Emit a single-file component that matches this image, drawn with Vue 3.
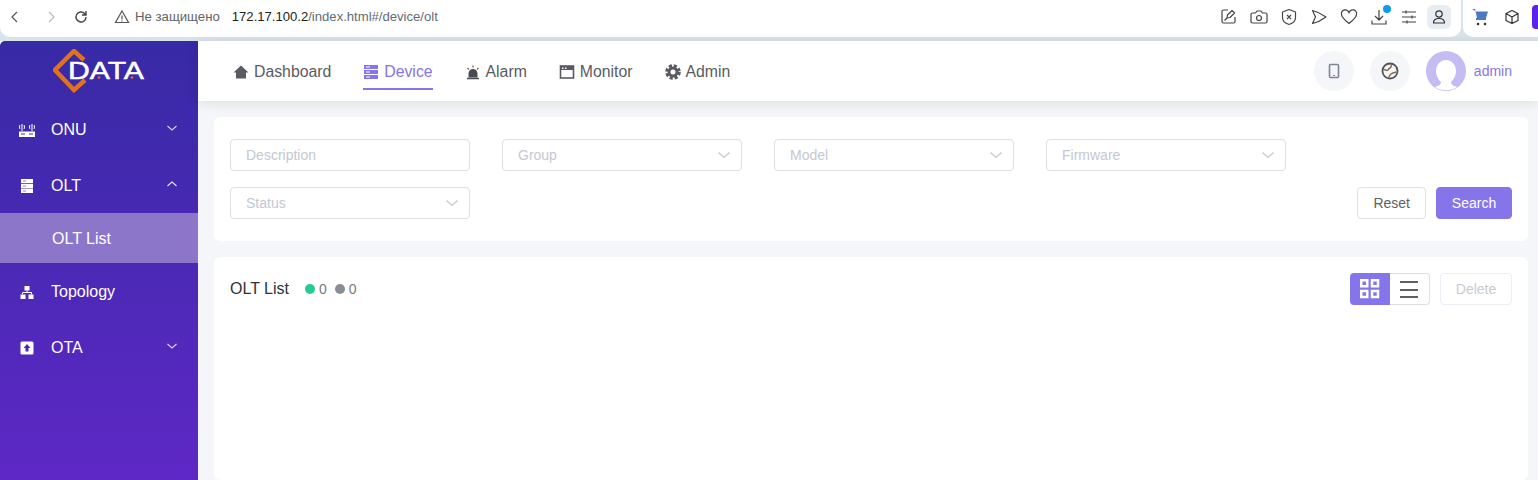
<script setup>
const chromeIcons = [
  'M9 3H4.500A1.500 1.500 0 0 0 3 4.500v10A1.500 1.500 0 0 0 4.500 16h10a1.500 1.500 0 0 0 1.500-1.500V10M8 11l.5-3L13 3.500 15.500 6 11 10.500zM5.500 13.500 8 11',
  'M3.500 6H6.500L8 4h4l1.500 2h3A1.500 1.500 0 0 1 18 7.500v7a1.500 1.500 0 0 1-1.500 1.500h-13A1.500 1.500 0 0 1 2 14.500v-7A1.500 1.500 0 0 1 3.500 6zM10 8.500a2.500 2.500 0 1 0 0 5 2.500 2.500 0 0 0 0-5z',
  'M10 2.500 16.500 5v5.500c0 3.500-3 6-6.500 7-3.500-1-6.500-3.500-6.500-7V5zM8 8l4 4M12 8l-4 4',
  'M3.500 3.500C8 4.500 13 7 17 10 13 13 8 15.500 3.500 16.500L6.500 10z',
  'M10 16.500C5.500 13 2.500 10.500 2.500 7.300A3.800 3.800 0 0 1 10 6a3.800 3.800 0 0 1 7.500 1.300C17.500 10.500 14.500 13 10 16.500z',
  'M10 3v9.500M6 9l4 4 4-4M3 13.500V17h14v-3.500',
  'M3 5h14M3 10h14M3 15h14M7 3.500v3M13 8.500v3M8 13.500v3'
]
const filters = [
  { label: 'Description', select: false },
  { label: 'Group', select: true },
  { label: 'Model', select: true },
  { label: 'Firmware', select: true },
  { label: 'Status', select: true }
]
const nav = ['Dashboard', 'Device', 'Alarm', 'Monitor', 'Admin']
</script>

<template>
  <div class="page">
    <div class="chrome">
      <div class="bar-main">
        <button class="tb"><svg width="14" height="14" viewBox="0 0 14 14"><path d="M9 2 4 7l5 5" fill="none" stroke="#555" stroke-width="1.200"/></svg></button>
        <button class="tb fwd"><svg width="14" height="14" viewBox="0 0 14 14"><path d="m5 2 5 5-5 5" fill="none" stroke="#bbb" stroke-width="1.200"/></svg></button>
        <button class="tb"><svg width="16" height="16" viewBox="0 0 16 16"><path d="M13 8a5 5 0 1 1-1.500-3.600L13 6M13 2v4H9" fill="none" stroke="#444" stroke-width="1.400"/></svg></button>
        <svg class="warn" width="16" height="16" viewBox="0 0 16 16"><path d="M8 2 14.500 13.500h-13zM8 6.500v4M8 11.500v1" fill="none" stroke="#555" stroke-width="1.200"/></svg>
        <span class="secure">Не защищено</span>
        <span class="url"><b>172.17.100.2</b>/index.html#/device/olt</span>
        <div class="tb-right">
          <button v-for="(d, i) in chromeIcons" :key="i" class="tb"><svg width="20" height="20" viewBox="0 0 20 20"><path :d="d" fill="none" stroke="#444" stroke-width="1.200" stroke-linejoin="round"/></svg><i v-if="i === 5" class="blue-dot"></i></button>
          <button class="tb profile"><svg width="16" height="16" viewBox="0 0 16 16"><circle cx="8" cy="5" r="3.200" fill="none" stroke="#333" stroke-width="1.200"/><path d="M2.500 14c0-3 2-4.500 5.500-4.500s5.500 1.500 5.500 4.500z" fill="none" stroke="#333" stroke-width="1.200" stroke-linejoin="round"/></svg></button>
        </div>
      </div>
      <div class="bar-side">
        <svg width="18" height="18" viewBox="0 0 18 18"><path d="M1 1h3l2 9h9l2-6.500H5z" fill="#4d78c5"/><path d="M5 10h10v2H5z" fill="#4d78c5"/><circle cx="7" cy="16" r="1.300" fill="#333"/><circle cx="14" cy="16" r="1.300" fill="#333"/></svg>
        <svg class="cube" width="16" height="16" viewBox="0 0 16 16"><path d="M8 1.500 14 4.500v7L8 14.500 2 11.500v-7zM2 4.500 8 8l6-3.500M8 8v6.500" fill="none" stroke="#333" stroke-width="1.200" stroke-linejoin="round"/></svg>
        <i class="ext"></i>
      </div>
    </div>

    <div class="app">
      <aside class="sidebar">
        <div class="logo">
          <svg width="92" height="44" viewBox="0 0 92 44">
            <path d="M31 11 21 2 2 21 21 41 32 31" fill="none" stroke="#e2711d" stroke-width="4.500"/>
            <text x="15" y="30" textLength="76" lengthAdjust="spacingAndGlyphs" class="logo-text">DATA</text>
            <circle cx="46" cy="28.500" r="1.300" fill="#e2711d"/>
            <circle cx="79" cy="28.500" r="1.300" fill="#e2711d"/>
          </svg>
        </div>
        <div class="item">
          <svg class="ic" width="16" height="16" viewBox="0 0 16 16"><path d="M0 9.500h16V15H0z" fill="#fff"/><path d="M3 2v7M13 2v7M1 3c-.6 1-.6 3 0 4M5 3c.6 1 .6 3 0 4M11 3c-.6 1-.6 3 0 4M15 3c.6 1 .6 3 0 4" fill="none" stroke="#fff" stroke-width="1"/><path d="M2 12h4M10 12h4" stroke="#3c2aa9" stroke-width="1"/></svg>
          <span>ONU</span>
          <svg class="chev" width="12" height="12" viewBox="0 0 12 12"><path d="m1.500 4 4.500 4 4.500-4" fill="none" stroke="#d8d3f2" stroke-width="1.100"/></svg>
        </div>
        <div class="item">
          <svg class="ic" width="16" height="16" viewBox="0 0 16 16"><path d="M2 1h12v4.300H2zM2 5.900h12v4.300H2zM2 10.800h12v4.300H2z" fill="#fff"/><path d="M4 3h3M4 8h3M4 13h3" stroke="#8f84cf" stroke-width="1"/></svg>
          <span>OLT</span>
          <svg class="chev" width="12" height="12" viewBox="0 0 12 12"><path d="m1.500 8 4.500-4 4.500 4" fill="none" stroke="#e8e5f8" stroke-width="1.100"/></svg>
        </div>
        <div class="sub">OLT List</div>
        <div class="item">
          <svg class="ic" width="16" height="16" viewBox="0 0 16 16"><path d="M5.500 2h5v4.500h-5zM1.500 10.500h5V15h-5zM9.500 10.500h5V15h-5z" fill="#fff"/><path d="M3.500 10.500V8.500h9v2M8 6.500v2" fill="none" stroke="#fff" stroke-width="1"/></svg>
          <span>Topology</span>
        </div>
        <div class="item">
          <svg class="ic" width="16" height="16" viewBox="0 0 16 16"><rect x="1.500" y="1.500" width="13" height="13" rx="1.500" fill="#fff"/><path d="M8 4 11.500 8H9.500v3.500h-3V8H4.500z" fill="#4f27b6"/></svg>
          <span>OTA</span>
          <svg class="chev" width="12" height="12" viewBox="0 0 12 12"><path d="m1.500 4 4.500 4 4.500-4" fill="none" stroke="#d8d3f2" stroke-width="1.100"/></svg>
        </div>
      </aside>

      <main class="main">
        <header class="header">
          <nav class="nav">
            <a v-for="n in nav" :key="n" class="nav-item" :class="{ active: n === 'Device' }">
              <svg v-if="n === 'Dashboard'" width="16" height="16" viewBox="0 0 16 16"><path d="M8 1.500 15.500 8.500H13V14.500H3V8.500H.5z" fill="#5a5b62"/></svg>
              <svg v-else-if="n === 'Device'" width="16" height="16" viewBox="0 0 16 16"><path d="M1 1h14v4H1zM1 6h14v4H1zM1 11h14v4H1z" fill="#8674ea"/><path d="M3 3h4M3 8h4M3 13h4" stroke="#fff" stroke-width="1"/></svg>
              <svg v-else-if="n === 'Alarm'" width="16" height="16" viewBox="0 0 16 16"><path d="M3.500 13.500V9.500a4.500 4.500 0 0 1 9 0v4z" fill="#4a4b52"/><path d="M2 14.500h12" stroke="#4a4b52" stroke-width="1.500"/><path d="M8 1.500v2M2.500 4 4 5.500M13.500 4 12 5.500" stroke="#7a6650" stroke-width="1.300"/></svg>
              <svg v-else-if="n === 'Monitor'" width="16" height="16" viewBox="0 0 16 16"><rect x="1.500" y="2" width="13" height="12" fill="none" stroke="#5a5b62" stroke-width="1.600"/><path d="M1.500 2h13v4h-13z" fill="#5a5b62"/><path d="M3 3.500h1.500V5H3zM6 3.500h1.500V5H6z" fill="#fff"/></svg>
              <svg v-else width="16" height="16" viewBox="0 0 16 16"><circle cx="8" cy="8" r="6.300" fill="none" stroke="#5a5b62" stroke-width="3" stroke-dasharray="3.100 1.850"/><circle cx="8" cy="8" r="4" fill="none" stroke="#5a5b62" stroke-width="3"/></svg>
              <span>{{ n }}</span>
            </a>
          </nav>
          <div class="user">
            <span class="round"><svg width="16" height="16" viewBox="0 0 16 16"><rect x="3.500" y="1.500" width="9" height="13" rx="1" fill="none" stroke="#7b8794" stroke-width="1.600"/><path d="M7 12.500h2" stroke="#4a90d9" stroke-width="1"/></svg></span>
            <span class="round"><svg width="18" height="18" viewBox="0 0 18 18"><circle cx="9" cy="9" r="7.500" fill="none" stroke="#555" stroke-width="1.800"/><path d="M2.500 7.500c2 0 2.500 1 3.500 1s1.500-2 3-2.500 1.500-3 1-4M8 15.500c0-2 1-2.500 2-3.500s2.500-1 5-2" fill="none" stroke="#8a6d4d" stroke-width="1.500"/></svg></span>
            <svg class="avatar" width="40" height="40" viewBox="0 0 40 40"><circle cx="20" cy="20" r="20" fill="#c5bcf2"/><path d="M20 9c6 0 10 5 10 11 0 5-3 9-5 11 0 3 3 4 6 5a20 20 0 0 1-22 0c3-1 6-2 6-5-2-2-5-6-5-11 0-6 4-11 10-11z" fill="#fff"/></svg>
            <span class="admin">admin</span>
          </div>
        </header>

        <section class="content">
          <div class="card filters">
            <div v-for="f in filters" :key="f.label" class="field">
              <span class="ph">{{ f.label }}</span>
              <svg v-if="f.select" width="14" height="14" viewBox="0 0 14 14"><path d="m1.500 4.500 5.500 5 5.500-5" fill="none" stroke="#c4c6cf" stroke-width="1.100"/></svg>
            </div>
            <div class="actions">
              <button class="btn">Reset</button>
              <button class="btn primary">Search</button>
            </div>
          </div>

          <div class="card list">
            <div class="list-head">
              <span class="title">OLT List</span>
              <span class="stat"><i class="dot green"></i>0</span>
              <span class="stat"><i class="dot gray"></i>0</span>
              <div class="tools">
                <div class="toggle">
                  <span class="tg on"><svg width="20" height="20" viewBox="0 0 20 20"><path d="M1.250 1.250h6v6h-6zM12 1.250h6v6h-6zM1.250 12h6v6h-6zM12 12h6v6h-6z" fill="none" stroke="#fff" stroke-width="2.500"/></svg></span>
                  <span class="tg"><svg width="20" height="20" viewBox="0 0 20 20"><path d="M0 3h18M0 11h18M0 18h18" stroke="#5f5f66" stroke-width="2"/></svg></span>
                </div>
                <button class="btn disabled">Delete</button>
              </div>
            </div>
          </div>
        </section>
      </main>
    </div>
  </div>
</template>

<style>
html, body { margin: 0; height: 100%; overflow: hidden; background: #fff; }
</style>

<style scoped>
.page { width: 1538px; height: 480px; display: flex; flex-direction: column; overflow: hidden; font-family: "Liberation Sans", Arial, sans-serif; }
button { font-family: inherit; border: 0; background: none; padding: 0; }
i { display: block; }

.chrome { height: 41px; flex: none; box-sizing: border-box; padding-bottom: 4px; background: #d9e3ec; display: flex; gap: 2px; }
.bar-main { flex: 1; background: #fff; display: flex; align-items: center; padding: 0 7px 4px 0; border-radius: 0 0 10px 10px; }
.bar-side { width: 75px; flex: none; background: #fff; display: flex; align-items: center; padding: 0 0 4px 8px; box-sizing: border-box; border-radius: 0 0 0 10px; }
.tb { width: 30px; height: 24px; display: flex; align-items: center; justify-content: center; position: relative; }
.fwd { margin-left: 6px; }
.warn { margin-left: 18px; }
.secure { margin-left: 5px; font-size: 13.200px; color: #5f6368; white-space: nowrap; }
.url { margin-left: 12px; font-size: 13.100px; color: #5f6b76; white-space: nowrap; }
.url b { font-weight: 400; color: #222; }
.tb-right { margin-left: auto; display: flex; align-items: center; }
.profile { width: 24px; margin: 0 3px; background: #e8edf1; border-radius: 6px; }
.blue-dot { position: absolute; top: 0; right: 3px; width: 8px; height: 8px; border-radius: 50%; background: #0a9bf5; }
.cube { margin-left: 15px; }
.ext { width: 6px; height: 24px; margin-left: 12px; background: #5b22f0; border-radius: 4px 0 0 4px; }

.app { flex: 1; display: flex; min-height: 0; }
.sidebar { width: 198px; flex: none; background: linear-gradient(180deg, #372aa5 0%, #5e28c6 100%); color: #fff; border-top-left-radius: 5px; font-size: 16px; }
.logo { height: 60px; display: flex; align-items: center; padding-left: 53px; box-sizing: border-box; }
.logo-text { font-family: "Liberation Sans", Arial, sans-serif; font-size: 24px; font-weight: 400; fill: #fff; stroke: #fff; stroke-width: .5px; }
.item { height: 56px; display: flex; align-items: center; padding: 2px 0 0 19px; box-sizing: border-box; }
.ic { flex: none; margin-right: 16px; }
.chev { margin-left: auto; margin-right: 20px; margin-top: -5px; }
.sub { height: 50px; line-height: 52px; padding-left: 52px; background: #8b76c9; }

.main { flex: 1; min-width: 0; display: flex; flex-direction: column; background: #f5f6fa; }
.header { height: 60px; flex: none; background: #fff; display: flex; align-items: center; padding: 0 26px 0 35px; box-shadow: 0 2px 12px rgba(0, 0, 0, .1); position: relative; }
.nav { display: flex; gap: 32px; height: 100%; align-items: stretch; }
.nav-item { display: flex; align-items: center; gap: 5px; font-size: 15.800px; color: #5a5b62; box-sizing: border-box; position: relative; padding-top: 2px; }
.nav-item.active { color: #8674ea; }
.nav-item.active::after { content: ""; position: absolute; left: 0; right: 0; top: 47px; height: 2px; background: #8674ea; }
.user { margin-left: auto; display: flex; align-items: center; gap: 16px; }
.round { width: 40px; height: 40px; border-radius: 50%; background: #f5f6fa; display: flex; align-items: center; justify-content: center; }
.admin { font-size: 14px; color: #8674ea; margin-left: -8px; }

.content { padding: 16px 10px 0 16px; display: flex; flex-direction: column; gap: 16px; flex: 1; min-height: 0; }
.card { background: #fff; border-radius: 6px; }
.filters { padding: 22px 16px; display: flex; flex-wrap: wrap; gap: 16px 32px; height: 124px; box-sizing: border-box; }
.field { width: 240px; height: 32px; box-sizing: border-box; border: 1px solid #dcdfe6; border-radius: 4px; padding: 0 10px 0 15px; display: flex; align-items: center; justify-content: space-between; font-size: 14px; color: #c4c8d2; }
.actions { margin-left: auto; display: flex; gap: 10px; }
.btn { height: 32px; box-sizing: border-box; border: 1px solid #dcdfe6; border-radius: 4px; background: #fff; color: #5f6066; font-size: 14px; padding: 0 15px; }
.btn.primary { background: #8674ea; border-color: #8674ea; color: #fff; width: 76px; padding: 0; }
.btn.disabled { color: #c8cbd3; border-color: #ebeef5; width: 72px; padding: 0; }

.list { flex: 1; padding: 16px; }
.list-head { display: flex; align-items: center; height: 32px; }
.title { font-size: 16px; color: #303133; margin-right: 16px; }
.stat { display: flex; align-items: center; gap: 4px; font-size: 14px; color: #77787f; margin-right: 8px; }
.dot { width: 10px; height: 10px; border-radius: 50%; }
.green { background: #25cb97; }
.gray { background: #8c8d94; }
.tools { margin-left: auto; display: flex; gap: 10px; }
.toggle { display: flex; }
.tg { width: 40px; height: 32px; box-sizing: border-box; display: flex; align-items: center; justify-content: center; border: 1px solid #dcdfe6; border-left: 0; border-radius: 0 4px 4px 0; }
.tg.on { background: #8674ea; border: 0; border-radius: 4px 0 0 4px; }
</style>
